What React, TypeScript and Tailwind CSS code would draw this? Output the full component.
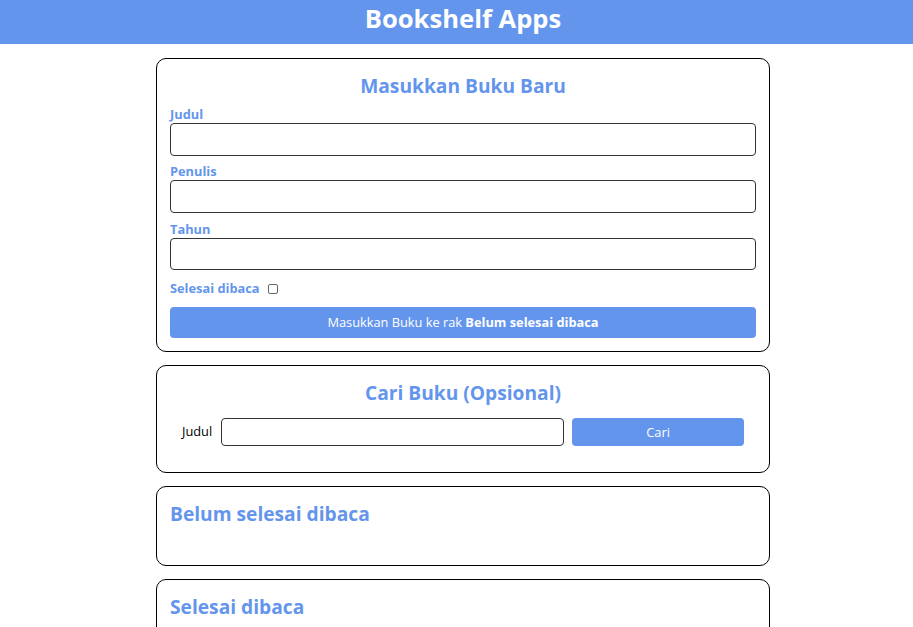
export default function App() {
  return (
    <div className="min-h-screen bg-white" style={{ fontFamily: '"Open Sans", sans-serif' }}>
      <header className="h-[44px] bg-[#6495ed] flex items-center justify-center pl-[13px]">
        <h1 className="text-[25.6px] font-bold text-white leading-none -mt-[6px]">Bookshelf Apps</h1>
      </header>

      <main className="w-[614px] ml-[156px] pt-[14px] flex flex-col gap-[13px]">
        <section className="border border-black rounded-[10px] px-[13px] pt-[13px] pb-[13px]">
          <h2 className="text-[19.2px] leading-[28px] font-bold text-[#6495ed] text-center">Masukkan Buku Baru</h2>
          <form className="flex flex-col" onSubmit={(e) => e.preventDefault()}>
            <label className="mt-[5px] text-[12.8px] leading-[18px] font-bold text-[#6495ed]">Judul</label>
            <input type="text" className="h-[33px] border border-[#333] rounded-[4px] px-2" />
            <label className="mt-[6px] text-[12.8px] leading-[18px] font-bold text-[#6495ed]">Penulis</label>
            <input type="text" className="h-[33px] border border-[#333] rounded-[4px] px-2" />
            <label className="mt-[7px] text-[12.8px] leading-[18px] font-bold text-[#6495ed]">Tahun</label>
            <input type="number" className="h-[32px] border border-[#333] rounded-[4px] px-2" />
            <div className="mt-[10px] flex items-center h-[18px]">
              <label className="text-[12.8px] font-bold text-[#6495ed]">Selesai dibaca</label>
              <input type="checkbox" className="ml-[8px] w-[10px] h-[10px] appearance-none border border-[#666] rounded-[2px] bg-white" />
            </div>
            <button className="mt-[9px] h-[31px] bg-[#6495ed] rounded-[4px] text-white text-[12.8px]">
              Masukkan Buku ke rak <span className="font-bold">Belum selesai dibaca</span>
            </button>
          </form>
        </section>

        <section className="border border-black rounded-[10px] px-[13px] pt-[13px] pb-[26px]">
          <h2 className="text-[19.2px] leading-[28px] font-bold text-[#6495ed] text-center">Cari Buku (Opsional)</h2>
          <form className="mt-[11px] px-[12px] flex items-center" onSubmit={(e) => e.preventDefault()}>
            <label className="text-[12.8px] text-black">Judul</label>
            <input type="text" className="ml-[9px] w-[343px] h-[28px] border border-[#333] rounded-[4px] px-2" />
            <button className="ml-[8px] flex-1 h-[28px] bg-[#6495ed] rounded-[4px] text-white text-[12.8px] pt-[1px]">Cari</button>
          </form>
        </section>

        <section className="border border-black rounded-[10px] px-[13px] pt-[13px] h-[80px]">
          <h2 className="text-[19.2px] leading-[28px] font-bold text-[#6495ed]">Belum selesai dibaca</h2>
        </section>

        <section className="border border-black rounded-[10px] px-[13px] pt-[13px] h-[80px]">
          <h2 className="text-[19.2px] leading-[28px] font-bold text-[#6495ed]">Selesai dibaca</h2>
        </section>
      </main>
    </div>
  )
}
